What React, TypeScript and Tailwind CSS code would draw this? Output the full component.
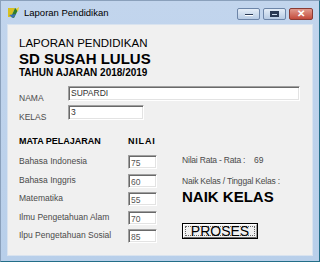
const subjects = [
  { name: "Bahasa Indonesia", value: "75" },
  { name: "Bahasa Inggris", value: "60" },
  { name: "Matematika", value: "55" },
  { name: "Ilmu Pengetahuan Alam", value: "70" },
  { name: "Ilpu Pengetahuan Sosial", value: "85" },
];

function Field({ value, className }: { value: string; className: string }) {
  return (
    <div
      className={`${className} bg-white border border-t-[#a0a0a0] border-l-[#a0a0a0] border-b-white border-r-white shadow-[inset_1px_1px_0_#696969,inset_-1px_-1px_0_#e3e3e3] pl-[2px] text-[8.5px] leading-[10px] text-[#333]`}
    >
      {value}
    </div>
  );
}

function VbIcon() {
  return (
    <svg width="13" height="12" viewBox="0 0 13 12">
      <path d="M1 1 L8 1 L4 10 L1 10 Z" fill="#d8c020" />
      <path d="M8 1 L4 10 L7 11 L11 3 Z" fill="#2f7d2a" />
      <path d="M9 2 L12 0 L11 5 Z" fill="#e8d030" />
      <path d="M2 8 L6 11 L9 7 Z" fill="#3b6fb6" />
    </svg>
  );
}

export default function App() {
  return (
    <div className="w-[320px] h-[262px] flex flex-col bg-gradient-to-b from-[#c2d5ed] to-[#b8cfea] border border-t-[#8aa0bb] border-l-[#8aa0bb] border-r-[#236e88] border-b-[#236e88] font-['Liberation_Sans',Arial,sans-serif] overflow-hidden">
      {/* Title bar */}
      <div className="h-[22px] flex items-center shrink-0">
        <div className="ml-[6px] mt-[2px]">
          <VbIcon />
        </div>
        <span className="ml-[4px] mt-[2px] text-[9.5px] text-black">Laporan Pendidikan</span>
        <div className="ml-auto mr-[6px] mt-[4px] flex gap-[3px]">
          <div className="w-[23px] h-[12px] rounded-[2px] border border-[#6d85a8] bg-gradient-to-b from-[#e4edf7] to-[#b7cbe4] flex items-end justify-center pb-[3px]">
            <div className="w-[8px] h-[2px] bg-[#2a3a55] border-b border-white" />
          </div>
          <div className="w-[23px] h-[12px] rounded-[2px] border border-[#6d85a8] bg-gradient-to-b from-[#e4edf7] to-[#b7cbe4] flex items-center justify-center">
            <div className="w-[9px] h-[6px] border-2 border-t-[3px] border-[#2a3a55]" />
          </div>
          <div className="w-[24px] h-[12px] rounded-[2px] border border-[#8a3b34] bg-gradient-to-b from-[#e09a8e] to-[#c2493a] flex items-center justify-center">
            <span className="text-[10px] leading-[10px] font-bold text-white">✕</span>
          </div>
        </div>
      </div>

      {/* Client area */}
      <div className="mx-[6px] mb-[5px] mt-[1px] flex-1 bg-[#f0f0f0] border border-[#d9e3ef] flex flex-col pl-[11px] pt-[12px]">
        <div className="text-[11.5px] leading-[13px] text-black">LAPORAN PENDIDIKAN</div>
        <div className="text-[15px] leading-[17px] font-bold text-black">SD SUSAH LULUS</div>
        <div className="text-[10px] leading-[12px] font-bold text-black">TAHUN AJARAN 2018/2019</div>

        <div className="mt-[7px] flex items-start">
          <div className="w-[49px] pt-[7px] text-[8.5px] leading-[10px] text-[#4a4a4a]">NAMA</div>
          <Field value="SUPARDI" className="w-[232px] h-[15px] pt-[1px]" />
        </div>
        <div className="mt-[2px] flex items-start">
          <div className="w-[49px] pt-[7px] text-[8.5px] leading-[10px] text-[#4a4a4a]">KELAS</div>
          <Field value="3" className="w-[76px] h-[15px] pt-[1px]" />
        </div>

        <div className="mt-[14px] flex">
          {/* Subjects */}
          <div className="w-[138px] flex flex-col">
            <div className="flex text-[9px] leading-[11px] font-bold text-black">
              <span className="w-[109px]">MATA PELAJARAN</span>
              <span className="tracking-[0.8px]">NILAI</span>
            </div>
            <div className="mt-[8px] flex flex-col gap-[4.5px]">
              {subjects.map((s) => (
                <div key={s.name} className="flex items-start">
                  <span className="w-[109px] pt-[1px] text-[8.5px] leading-[10px] text-[#4a4a4a]">{s.name}</span>
                  <Field value={s.value} className="w-[29px] h-[14px] pt-[2px] text-[#555]" />
                </div>
              ))}
            </div>
          </div>

          {/* Result */}
          <div className="ml-[25px] pt-[19px] flex flex-col">
            <div className="h-[10px] text-[8.5px] leading-[10px] text-[#4a4a4a] flex">
              <span className="w-[72px] tracking-[-0.2px]">Nilai Rata - Rata :</span>
              <span>69</span>
            </div>
            <div className="mt-[11px] h-[10px] text-[8.5px] leading-[10px] text-[#4a4a4a] tracking-[-0.2px]">
              Naik Kelas / Tinggal Kelas :
            </div>
            <div className="mt-[2px] h-[17px] text-[15px] leading-[17px] font-bold text-black">NAIK KELAS</div>
            <div className="mt-[18px] w-[76px] h-[16px] shrink-0 bg-[#f0f0f0] border border-black flex">
              <div className="flex-1 flex p-[1px] border border-t-white border-l-white border-b-[#696969] border-r-[#a0a0a0]">
                <div className="flex-1 border border-dotted border-[#666] flex items-center justify-center">
                  <span className="text-[14px] leading-[12px] text-black">PROSES</span>
                </div>
              </div>
            </div>
          </div>
        </div>
      </div>
    </div>
  );
}
